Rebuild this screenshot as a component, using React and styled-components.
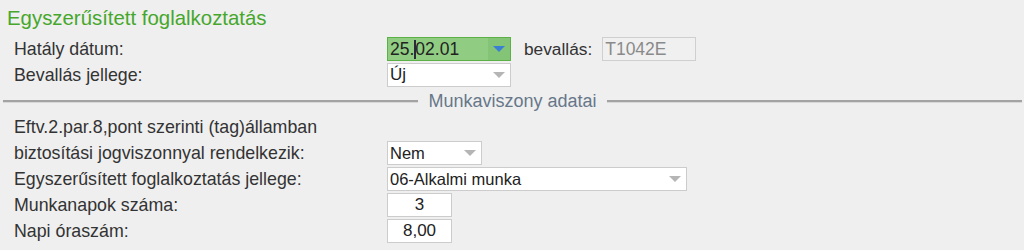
import React from "react";
import styled, { createGlobalStyle } from "styled-components";

const Global = createGlobalStyle`
  html, body { margin: 0; padding: 0; background: #efefef; }
  body { font-family: "Liberation Sans", Arial, sans-serif; color: #333; }
`;

const Page = styled.div`
  width: 1024px;
  height: 250px;
  background: #efefef;
  overflow: hidden;
`;

const Title = styled.h1`
  margin: 4px 0 0 7px;
  height: 32px;
  font-size: 20.4px;
  line-height: 28px;
  font-weight: normal;
  color: #46a72c;
`;

const Form = styled.div`
  display: grid;
  grid-template-columns: 373px 1fr;
  grid-auto-rows: 26px;
  padding-left: 14px;
  align-items: center;
`;

const Label = styled.div`
  font-size: 17.8px;
  line-height: 20px;
  color: #333;
  white-space: nowrap;
`;

const Controls = styled.div`
  display: flex;
  align-items: center;
  gap: 12px;
  height: 26px;
`;

const Field = styled.div`
  box-sizing: border-box;
  width: ${(p) => p.$w}px;
  height: 24px;
  border: 1px solid ${(p) => (p.$active ? "#5bb046" : p.$disabled ? "#cfcfcf" : "#cccccc")};
  background: ${(p) => (p.$active ? "#90cd82" : p.$disabled ? "#f0f0f0" : "#ffffff")};
  color: ${(p) => (p.$disabled ? "#8a8a8a" : "#222")};
  font-size: ${(p) => p.$fs || 16}px;
  line-height: 22px;
  padding: 0 ${(p) => (p.$center ? 0 : 2)}px;
  display: flex;
  align-items: center;
  justify-content: ${(p) => (p.$center ? "center" : "flex-start")};
  white-space: nowrap;
`;

const Value = styled.span`
  flex: 1;
`;

const Arrow = styled.span`
  box-sizing: border-box;
  width: 22px;
  height: 22px;
  margin-right: -2px;
  display: flex;
  align-items: center;
  justify-content: center;
  background: ${(p) => (p.$active ? "#84c476" : "transparent")};
  &::after {
    content: "";
    width: 0;
    height: 0;
    border-left: 6px solid transparent;
    border-right: 6px solid transparent;
    border-top: 6px solid ${(p) => (p.$active ? "#3b7fd4" : "#b5b5b5")};
  }
`;

const Caret = styled.span`
  display: inline-block;
  width: 2px;
  height: 19px;
  background: #2a2a3a;
  vertical-align: -4px;
  margin: 0 -1px 0 0;
`;

const InlineLabel = styled.span`
  font-size: 17.3px;
  color: #333;
  margin-left: 1px;
  margin-right: -2px;
`;

const Separator = styled.div`
  grid-column: 1 / -1;
  margin-left: -11px;
  margin-right: 2px;
  display: flex;
  align-items: center;
  gap: 10px;
  height: 26px;
`;

const Line = styled.div`
  flex: 1;
  height: 2px;
  background: #a3a3a3;
  box-shadow: 0 1px 0 #d8d8d8;
`;

const Legend = styled.span`
  font-size: 18px;
  color: #67778a;
  white-space: nowrap;
`;

const Select = ({ w, value, active, fs, children }) => (
  <Field $w={w} $active={active} $fs={fs}>
    <Value>{children || value}</Value>
    <Arrow $active={active} />
  </Field>
);

export default function App() {
  return (
    <Page>
      <Global />
      <Title>Egyszerűsített foglalkoztatás</Title>
      <Form>
        <Label>Hatály dátum:</Label>
        <Controls>
          <Select w={124} active fs={17.5}>
            25.<Caret />02.01
          </Select>
          <InlineLabel>bevallás:</InlineLabel>
          <Field $w={94} $disabled $fs={17.5}>T1042E</Field>
        </Controls>

        <Label>Bevallás jellege:</Label>
        <Controls>
          <Select w={124} value="Új" fs={17} />
        </Controls>

        <Separator>
          <Line />
          <Legend>Munkaviszony adatai</Legend>
          <Line />
        </Separator>

        <Label>Eftv.2.par.8,pont szerinti (tag)államban</Label>
        <div />

        <Label>biztosítási jogviszonnyal rendelkezik:</Label>
        <Controls>
          <Select w={95} value="Nem" fs={16.5} />
        </Controls>

        <Label>Egyszerűsített foglalkoztatás jellege:</Label>
        <Controls>
          <Select w={300} value="06-Alkalmi munka" fs={16.5} />
        </Controls>

        <Label>Munkanapok száma:</Label>
        <Controls>
          <Field $w={65} $center $fs={17}>3</Field>
        </Controls>

        <Label>Napi óraszám:</Label>
        <Controls>
          <Field $w={65} $center $fs={17}>8,00</Field>
        </Controls>
      </Form>
    </Page>
  );
}
